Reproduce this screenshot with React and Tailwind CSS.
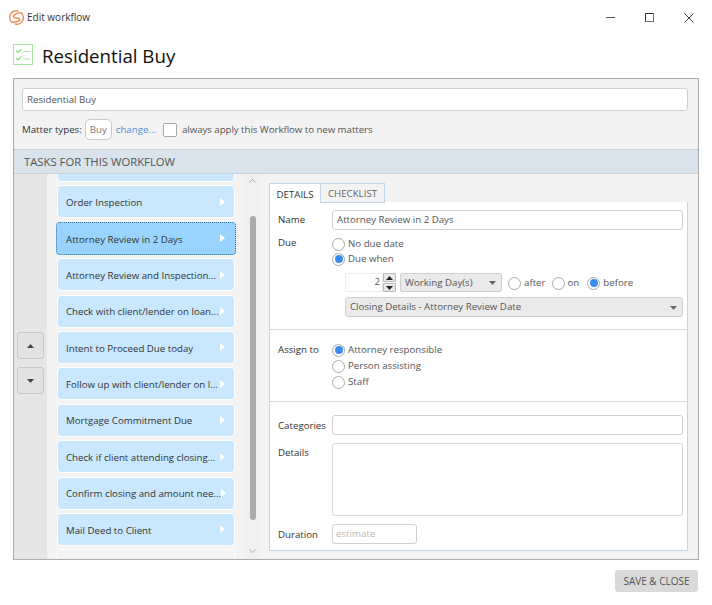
import React from 'react';

const TASKS = [
  'Order Inspection',
  'Attorney Review in 2 Days',
  'Attorney Review and Inspection...',
  'Check with client/lender on loan...',
  'Intent to Proceed Due today',
  'Follow up with client/lender on l...',
  'Mortgage Commitment Due',
  'Check if client attending closing...',
  'Confirm closing and amount nee...',
  'Mail Deed to Client',
];

const Caret = ({ className }) => (
  <svg width="7" height="4" viewBox="0 0 7 4" className={className}>
    <path d="M0 0h7L3.5 4z" fill="currentColor" />
  </svg>
);

const Radio = ({ checked, label }) => (
  <span className="flex items-center gap-[3px]">
    <span className="flex h-[13px] w-[13px] items-center justify-center rounded-full border border-[#a9a9a9] bg-white">
      {checked && <span className="h-[8px] w-[8px] rounded-full bg-[#3b8beb]" />}
    </span>
    <span className="text-[#555]">{label}</span>
  </span>
);

const TaskItem = ({ label, selected }) => (
  <div
    className={`flex h-[33px] shrink-0 items-center justify-between rounded-[4px] pr-[9px] ${
      selected
        ? 'mx-[-1px] border border-dotted border-[#2f6f9f] bg-[#99d4ff] pl-[9px] pr-[10px]'
        : 'border border-white bg-[#c9e8ff] pl-[8px]'
    }`}
  >
    <span className="whitespace-nowrap pt-[3px] text-[#333]">{label}</span>
    <svg width="5" height="8" viewBox="0 0 5 8" className="shrink-0">
      <path d="M0 0l5 4-5 4z" fill="#fff" />
    </svg>
  </div>
);

const App = () => {
  return (
    <div className="flex h-[605px] w-[712px] flex-col overflow-hidden bg-white font-['Open_Sans',sans-serif] text-[9.7px] text-[#333]">
      {/* Title bar */}
      <div className="flex h-[35px] shrink-0 items-center pl-[9px] pr-[18px]">
        <svg width="15" height="15" viewBox="0 0 15 15" fill="none" stroke="#f08a4b" strokeWidth="1.4">
          <path d="M3.200 12.600A6.600 6.600 0 0 1 9.500 1.200M11.800 2.400A6.600 6.600 0 0 1 5.500 13.800" />
          <path d="M11.500 2.800C8.500 3 4 4.500 4.500 6.800c.5 2 6 .5 6.300 2.600C11 11.500 6.500 12 3.500 12.200" />
        </svg>
        <span className="ml-[3px] text-[10px] text-[#333]">Edit workflow</span>
        <div className="ml-auto flex items-center gap-[30px] text-[#444]">
          <span className="h-px w-[9px] bg-[#555]" />
          <span className="h-[9px] w-[9px] border border-[#333] border-b-[#777] border-r-[#777]" />
          <svg width="10" height="10" viewBox="0 0 10 10" stroke="#444" strokeWidth="1">
            <path d="M.5.5l9 9M9.500.5l-9 9" />
          </svg>
        </div>
      </div>

      {/* Heading */}
      <div className="flex h-[43px] shrink-0 items-start pl-[13px]">
        <svg width="21" height="21" viewBox="0 0 21 21" fill="none" className="mt-[9px]">
          <rect x=".5" y=".5" width="19" height="20" stroke="#a5e8a0" />
          <path d="M3 6.500l2 2 3.500-3.500M3 14l2 2 3.500-3.500" stroke="#86e080" strokeWidth="1.200" />
          <path d="M10.500 7.500h7M10.500 15h7" stroke="#b5d8b5" />
        </svg>
        <span className="ml-[8px] mt-[6px] text-[18.700px] leading-[30px] text-[#111]">Residential Buy</span>
      </div>

      {/* Main panel */}
      <div className="mx-[13px] flex h-[482px] w-[686px] shrink-0 flex-col border border-[#adadad] bg-[#f3f3f3]">
        <div className="flex h-[70px] shrink-0 flex-col px-[8px] pt-[9px]">
          <input
            readOnly
            value="Residential Buy"
            className="h-[23px] w-[666px] rounded-[3px] border border-[#d0d0d0] bg-white px-[4px] text-[#555] outline-none"
          />
          <div className="mt-[8px] flex items-center">
            <span className="pt-[2px] text-[#333]">Matter types:</span>
            <span className="ml-[3px] flex h-[21px] w-[27px] items-center justify-center rounded-[5px] border border-[#c8c8c8] bg-white pt-[1px] text-[#777]">
              Buy
            </span>
            <span className="ml-[4px] pt-[2px] text-[#4d8fd6]">change...</span>
            <span className="ml-[7px] h-[14px] w-[14px] rounded-[2px] border border-[#a9a9a9] bg-white" />
            <span className="ml-[5px] pt-[2px] tracking-[-0.05px] text-[#555]">always apply this Workflow to new matters</span>
          </div>
        </div>

        <div className="flex h-[25px] shrink-0 items-center border-y border-[#c6d2dc] bg-[#d8e3ec] pl-[10px] pt-[1px] text-[11.300px] text-[#555]">
          TASKS FOR THIS WORKFLOW
        </div>

        <div className="flex min-h-0 flex-1">
          {/* Move buttons */}
          <div className="flex w-[33px] shrink-0 flex-col gap-[8px] bg-[#e6e6e6] pl-[3px] pt-[158px]">
            <button className="flex h-[27px] w-[27px] items-center justify-center rounded-[3px] border border-[#c8c8c8] bg-[#e2e2e2] text-[#444]">
              <Caret className="rotate-180" />
            </button>
            <button className="flex h-[27px] w-[27px] items-center justify-center rounded-[3px] border border-[#c8c8c8] bg-[#e2e2e2] text-[#444]">
              <Caret />
            </button>
          </div>

          {/* Task list */}
          <div className="w-[198px] shrink-0 overflow-hidden px-[10px]">
            <div className="mt-[-25px] flex flex-col gap-[3.400px]">
              <TaskItem label="" />
              {TASKS.map((task) => (
                <TaskItem key={task} label={task} selected={task === 'Attorney Review in 2 Days'} />
              ))}
              <div className="h-[33px] shrink-0 rounded-[4px] border border-white bg-[#f3f3f3]" />
            </div>
          </div>

          {/* Scrollbar */}
          <div className="flex w-[15px] shrink-0 flex-col items-center bg-[#f0f0f0] pt-[5px] text-[#aaa]">
            <svg width="7" height="4" viewBox="0 0 7 4" fill="none" stroke="currentColor"><path d="M.5 3.500l3-3 3 3" /></svg>
            <div className="mt-[33px] h-[304px] w-[6px] rounded-[3px] bg-[#ababab]" />
            <svg width="7" height="4" viewBox="0 0 7 4" fill="none" stroke="currentColor" className="mt-[29px]"><path d="M.5.500l3 3 3-3" /></svg>
          </div>

          {/* Details */}
          <div className="min-w-0 flex-1 pl-[9px] pr-[10px] pt-[9px]">
            <div className="flex h-[20px]">
              <div className="flex h-[20px] w-[52px] items-center justify-center border border-b-0 border-[#c3d5e6] bg-white pt-[3px] text-[#333]">DETAILS</div>
              <div className="flex h-[20px] w-[64px] items-center justify-center border border-l-0 border-[#c3d5e6] bg-[#f3f3f3] pt-[3px] text-[#666]">CHECKLIST</div>
            </div>
            <div className="mt-[-1px] h-[349px] border border-t-0 border-[#c3d5e6] bg-white">
              <div className="h-[128px] border-b border-[#d8d8d8] pl-[8px] pr-[4px] pt-[8px]">
                <div className="flex items-center">
                  <span className="w-[54px] pt-[1px] text-[#333]">Name</span>
                  <div className="flex h-[20px] flex-1 items-center rounded-[3px] border border-[#d0d0d0] px-[4px] pt-[1px] text-[#555]">Attorney Review in 2 Days</div>
                </div>
                <div className="mt-[6px] flex">
                  <span className="w-[54px] text-[#333]">Due</span>
                  <div className="flex flex-1 flex-col gap-[0.500px] pt-[1px]">
                    <Radio label="No due date" />
                    <Radio checked label="Due when" />
                    <div className="ml-[13px] mt-[6px] flex items-center">
                      <span className="flex h-[19px] w-[38px] items-center justify-end pr-[2px] text-[#555] border border-[#eeeeee]">2</span>
                      <span className="flex h-[19px] w-[13px] flex-col gap-px">
                        <span className="flex h-[9px] items-center justify-center rounded-[1px] border border-[#bbb] bg-[#e8e8e8] text-[#222]"><Caret className="rotate-180" /></span>
                        <span className="flex h-[9px] items-center justify-center rounded-[1px] border border-[#bbb] bg-[#e8e8e8] text-[#222]"><Caret /></span>
                      </span>
                      <span className="ml-[4px] flex h-[19px] w-[102px] items-center justify-between rounded-[2px] border border-[#d0d0d0] bg-[#eaeaea] pl-[4px] pr-[5px] pt-[1px] text-[#555]">
                        Working Day(s)
                        <Caret className="text-[#666]" />
                      </span>
                      <span className="ml-[6px] mt-[1px] flex items-center gap-[6px]">
                        <Radio label="after" />
                        <Radio label="on" />
                        <span className="ml-[2px]"><Radio checked label="before" /></span>
                      </span>
                    </div>
                    <div className="ml-[13px] mt-[4.500px] flex h-[20px] items-center justify-between rounded-[3px] border border-[#d0d0d0] bg-[#eaeaea] pl-[4px] pr-[5px] pt-[1px] text-[#555]">
                      Closing Details - Attorney Review Date
                      <Caret className="text-[#666]" />
                    </div>
                  </div>
                </div>
              </div>

              <div className="flex h-[72px] border-b border-[#d8d8d8] pl-[8px] pt-[13px]">
                <span className="w-[54px] text-[#333]">Assign to</span>
                <div className="flex flex-col gap-[1.500px]">
                  <Radio checked label="Attorney responsible" />
                  <Radio label="Person assisting" />
                  <Radio label="Staff" />
                </div>
              </div>

              <div className="pl-[8px] pr-[4px] pt-[13px]">
                <div className="flex items-center">
                  <span className="w-[54px] pt-[2px] text-[#333]">Categories</span>
                  <div className="h-[20px] flex-1 rounded-[3px] border border-[#d0d0d0]" />
                </div>
                <div className="mt-[8px] flex">
                  <span className="w-[54px] pt-[3px] text-[#333]">Details</span>
                  <div className="h-[73px] flex-1 rounded-[3px] border border-[#d8d8d8]" />
                </div>
                <div className="mt-[8px] flex items-center">
                  <span className="w-[54px] pt-[2px] text-[#333]">Duration</span>
                  <div className="flex h-[20px] w-[85px] items-center rounded-[3px] border border-[#d0d0d0] px-[3px] pt-[1px] text-[#bbb]">estimate</div>
                </div>
              </div>
            </div>
          </div>
        </div>
      </div>

      {/* Footer */}
      <div className="flex justify-end pr-[14px] pt-[10px]">
        <button className="flex h-[22px] w-[83px] items-center justify-center rounded-[3px] bg-[#d9d9d9] text-[10px] text-[#555]">SAVE &amp; CLOSE</button>
      </div>
    </div>
  );
};

export default App;
